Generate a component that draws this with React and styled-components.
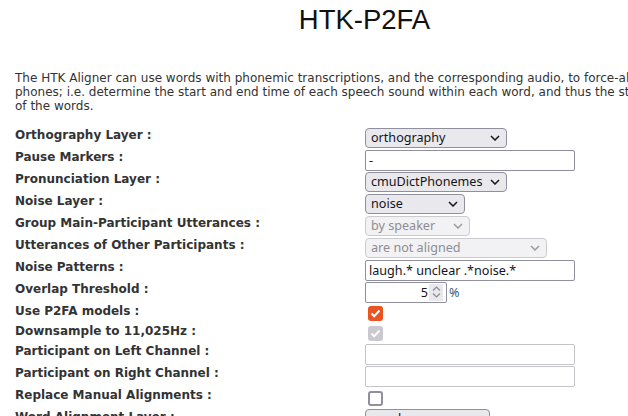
import React from 'react'
import styled, { createGlobalStyle } from 'styled-components'

const Global = createGlobalStyle`
  html, body {
    margin: 0;
    padding: 0;
    overflow: hidden;
    background: #fff;
  }
`

const Page = styled.div`
  width: 699px;
  padding: 4px 15px 0;
  color: #333;
  font-family: "DejaVu Sans", sans-serif;
  font-size: 12px;
`

const Title = styled.h1`
  margin: 0;
  font-family: "Liberation Sans", Arial, sans-serif;
  font-weight: normal;
  font-size: 27.5px;
  line-height: 32px;
  color: #111;
  text-align: center;
`

const Intro = styled.p`
  margin: 35px 0 14px;
  line-height: 14px;
  white-space: nowrap;
`

const Form = styled.div`
  display: flex;
  flex-direction: column;
`

const Row = styled.div`
  display: flex;
  height: ${p => p.$h || 22}px;
`

const Label = styled.div`
  width: 350px;
  flex: none;
  font-weight: bold;
  line-height: 14px;
  padding-top: 1px;
`

const Cell = styled.div`
  display: flex;
  align-items: center;
  align-self: ${p => (p.$top ? 'flex-start' : 'center')};
  font-family: "Noto Sans", sans-serif;
  font-size: 12.6px;
`

const SelectWrap = styled.div`
  position: relative;
  width: ${p => p.$w}px;
  height: 20px;
`

const Select = styled.div`
  box-sizing: border-box;
  width: 100%;
  height: 100%;
  display: flex;
  align-items: center;
  padding: 0 20px 0 5px;
  border: 1px solid ${p => (p.$disabled ? '#cacad0' : '#8f8f9d')};
  border-radius: 4px;
  background: ${p => (p.$disabled ? '#f2f2f5' : '#e9e9ed')};
  color: ${p => (p.$disabled ? '#8d8d93' : '#15141a')};
  line-height: 18px;
  white-space: nowrap;
`

const Chevron = styled.svg`
  position: absolute;
  right: 7px;
  top: 7px;
`

const TextInput = styled.div`
  box-sizing: border-box;
  width: ${p => p.$w || 210}px;
  height: 21px;
  display: flex;
  align-items: center;
  padding: 0 3px;
  border: 1px solid ${p => (p.$light ? '#c3c3c8' : '#8f8f9d')};
  border-radius: 2px;
  background: #fff;
  color: #15141a;
  white-space: nowrap;
`

const NumberBox = styled.div`
  box-sizing: border-box;
  width: 82px;
  height: 21px;
  display: flex;
  align-items: stretch;
  border: 1px solid #8f8f9d;
  border-radius: 2px;
  background: #fff;
`

const NumberValue = styled.div`
  flex: 1;
  display: flex;
  align-items: center;
  justify-content: flex-end;
  padding-right: 1px;
  color: #15141a;
`

const Spinner = styled.div`
  width: 14px;
  margin: 1px 3px 1px 0;
  background: #e9e9ed;
  display: flex;
  flex-direction: column;
  align-items: center;
  justify-content: center;
  gap: 2px;
`

const Unit = styled.span`
  margin-left: 2px;
  color: #3f5878;
`

const Box = styled.div`
  box-sizing: border-box;
  width: 15px;
  height: 15px;
  margin-left: 3px;
  border-radius: 3px;
  display: flex;
  align-items: center;
  justify-content: center;
  background: ${p => (p.$checked ? (p.$disabled ? '#c9c9cf' : '#e95420') : '#fff')};
  border: ${p => (p.$checked ? 'none' : '2px solid #8f8f9d')};
`

function Arrow({ color = '#15141a' }) {
  return (
    <Chevron width="10" height="6" viewBox="0 0 10 6">
      <path d="M1 1 L5 5 L9 1" fill="none" stroke={color} strokeWidth="1.5" />
    </Chevron>
  )
}

function Dropdown({ w, value, disabled }) {
  return (
    <SelectWrap $w={w}>
      <Select $disabled={disabled}>{value}</Select>
      <Arrow color={disabled ? '#9a9aa0' : '#15141a'} />
    </SelectWrap>
  )
}

function Check({ checked, disabled }) {
  return (
    <Box $checked={checked} $disabled={disabled}>
      {checked && (
        <svg width="11" height="9" viewBox="0 0 11 9">
          <path d="M1.5 4.5 L4.2 7.2 L9.5 1.5" fill="none" stroke="#fff" strokeWidth="2" />
        </svg>
      )}
    </Box>
  )
}

function App() {
  return (
    <Page>
      <Global />
      <Title>HTK-P2FA</Title>
      <Intro>
        The HTK Aligner can use words with phonemic transcriptions, and the corresponding audio, to force-align words to their<br />
        phones; i.e. determine the start and end time of each speech sound within each word, and thus the start/end times<br />
        of the words.
      </Intro>
      <Form>
        <Row>
          <Label>Orthography Layer :</Label>
          <Cell><Dropdown w={142} value="orthography" /></Cell>
        </Row>
        <Row>
          <Label>Pause Markers :</Label>
          <Cell><TextInput>-</TextInput></Cell>
        </Row>
        <Row>
          <Label>Pronunciation Layer :</Label>
          <Cell><Dropdown w={142} value="cmuDictPhonemes" /></Cell>
        </Row>
        <Row>
          <Label>Noise Layer :</Label>
          <Cell><Dropdown w={100} value="noise" /></Cell>
        </Row>
        <Row>
          <Label>Group Main-Participant Utterances :</Label>
          <Cell><Dropdown w={105} value="by speaker" disabled /></Cell>
        </Row>
        <Row>
          <Label>Utterances of Other Participants :</Label>
          <Cell><Dropdown w={182} value="are not aligned" disabled /></Cell>
        </Row>
        <Row>
          <Label>Noise Patterns :</Label>
          <Cell><TextInput>laugh.* unclear .*noise.*</TextInput></Cell>
        </Row>
        <Row>
          <Label>Overlap Threshold :</Label>
          <Cell>
            <NumberBox>
              <NumberValue>5</NumberValue>
              <Spinner>
                <svg width="9" height="5" viewBox="0 0 9 5">
                  <path d="M1 4.5 L4.5 1 L8 4.5" fill="none" stroke="#8a8a90" strokeWidth="1.2" />
                </svg>
                <svg width="9" height="5" viewBox="0 0 9 5">
                  <path d="M1 0.5 L4.5 4 L8 0.5" fill="none" stroke="#8a8a90" strokeWidth="1.2" />
                </svg>
              </Spinner>
            </NumberBox>
            <Unit>%</Unit>
          </Cell>
        </Row>
        <Row $h={20}>
          <Label>Use P2FA models :</Label>
          <Cell><Check checked /></Cell>
        </Row>
        <Row $h={20}>
          <Label>Downsample to 11,025Hz :</Label>
          <Cell><Check checked disabled /></Cell>
        </Row>
        <Row>
          <Label>Participant on Left Channel :</Label>
          <Cell><TextInput $light /></Cell>
        </Row>
        <Row>
          <Label>Participant on Right Channel :</Label>
          <Cell><TextInput $light /></Cell>
        </Row>
        <Row>
          <Label>Replace Manual Alignments :</Label>
          <Cell><Check /></Cell>
        </Row>
        <Row>
          <Label>Word Alignment Layer :</Label>
          <Cell $top><Dropdown w={125} value="word" /></Cell>
        </Row>
      </Form>
    </Page>
  )
}

export default App
